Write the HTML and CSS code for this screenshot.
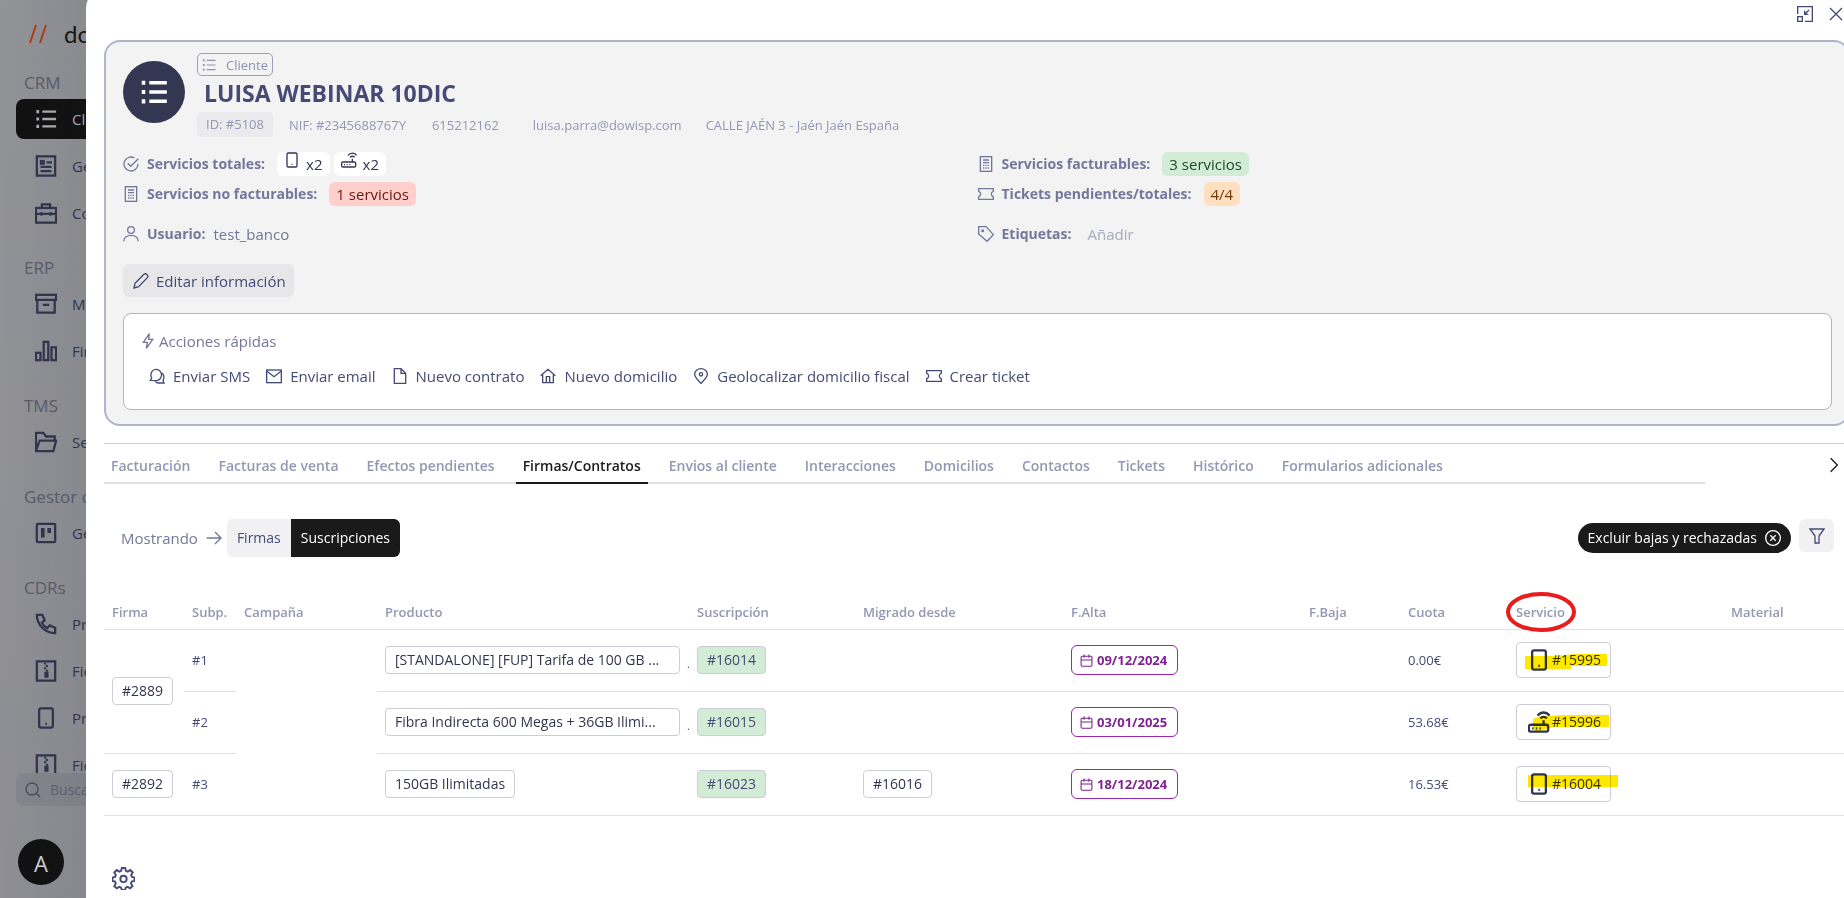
FILE: index.html
```html
<!DOCTYPE html>
<html lang="es">
<head>
   <meta charset="UTF-8">
   <meta name="viewport" content="width=device-width, initial-scale=1.0">
   <title>Cliente - LUISA WEBINAR 10DIC</title>
   <link rel="stylesheet" href="styles.css">
</head>
<body>

   <!-- Icon set -->
   <svg class="icon-defs" aria-hidden="true">
      <symbol id="i-list" viewBox="0 0 24 24"><path d="M8 4h15M8 12h15M8 20h15"/><path d="M1.500 4h3M1.500 12h3M1.500 20h3" stroke-width="3.500"/></symbol>
      <symbol id="i-news" viewBox="0 0 24 24"><rect x="2" y="1.500" width="20" height="21"/><path d="M12.500 8h6M6 13h12M6 17.500h12"/><rect x="6.500" y="6.500" width="3" height="3"/></symbol>
      <symbol id="i-case" viewBox="0 0 24 24"><rect x="1" y="6.500" width="22" height="16"/><path d="M7.500 6.500v-4h9v4M1 13h22M7 11v4M17 11v4"/></symbol>
      <symbol id="i-archive" viewBox="0 0 24 24"><rect x="1" y="2" width="22" height="5.500"/><path d="M2.500 7.500v14h19v-14M8.500 13h7"/></symbol>
      <symbol id="i-chart" viewBox="0 0 24 24"><rect x="1" y="14" width="5" height="8"/><rect x="9.500" y="2" width="5" height="20"/><rect x="18" y="8" width="5" height="14"/></symbol>
      <symbol id="i-folder" viewBox="0 0 24 24"><path d="M1 22V2h8l3 4h9.500v4M1 22l4-11.500h18L20 22z"/></symbol>
      <symbol id="i-board" viewBox="0 0 24 24"><rect x="2" y="2" width="20" height="20" rx="1"/><path d="M8.500 6.500v10.500M15.500 6.500v5.500" stroke-width="4"/></symbol>
      <symbol id="i-phone" viewBox="0 0 24 24"><path d="M2 2h6l2.500 6-3 2.500c1.200 2.800 3.200 4.800 6 6L16 13.500l6 2.500v6C11 22 2 13 2 2z"/></symbol>
      <symbol id="i-zip" viewBox="0 0 24 24"><rect x="2" y="1.500" width="20" height="21"/><path d="M11 3v2M13 5.500v2M11 8v2M13 10.500v2M11.500 14v4h2v-4z" stroke-width="2.500"/></symbol>
      <symbol id="i-mobile" viewBox="0 0 24 24"><rect x="4.500" y="1.500" width="15" height="21" rx="2"/><path d="M11.300 18.500h1.600"/></symbol>
      <symbol id="i-router" viewBox="0 0 24 24"><rect x="1" y="15" width="21" height="7.500" rx="2"/><path d="M17 15v-5M4.500 19h1.500M8.500 19h1.500M12.500 19h1.500M13.500 8c2-2 5-2 7 0M10.500 5c3.500-4.500 10-4.500 13 0"/></symbol>
      <symbol id="i-search" viewBox="0 0 24 24"><circle cx="10.500" cy="10.500" r="9"/><path d="M17 17l6 6"/></symbol>
      <symbol id="i-check" viewBox="0 0 24 24"><path d="M17 2.800A10.500 10.500 0 1 0 22.500 12M7 11l4.500 4.500L23 4"/></symbol>
      <symbol id="i-calc" viewBox="0 0 24 24"><rect x="3.500" y="1" width="17" height="22"/><path d="M7.500 6h9M7.500 10h9"/><path d="M7.500 14h2M11 14h2M14.500 14h2M7.500 18h2M11 18h2M14.500 18h2"/></symbol>
      <symbol id="i-user" viewBox="0 0 24 24"><circle cx="12" cy="6" r="5"/><path d="M1 23c0-12 22-12 22 0"/></symbol>
      <symbol id="i-ticket" viewBox="0 0 24 24"><path d="M1 4h22v4c-4 1-4 7 0 8v4H1v-4c4-1 4-7 0-8z"/></symbol>
      <symbol id="i-tag" viewBox="0 0 24 24"><path d="M1 1h11l11 12-9.500 10L1 12z"/><circle cx="7" cy="7" r="1.300"/></symbol>
      <symbol id="i-pencil" viewBox="0 0 24 24"><path d="M1.500 22.500l1.500-7L16.500 2c3-2.500 7.500 2 5 5L8.500 20.500z"/></symbol>
      <symbol id="i-bolt" viewBox="0 0 24 24"><path d="M14 1L5 14h6L9.500 23 19 9.500h-6z"/></symbol>
      <symbol id="i-chat" viewBox="0 0 24 24"><path d="M2 18.500l2-3.500a8 8.500 0 1 1 7 4z"/><path d="M19.500 7.500c3.500 3 3.500 8 1.500 11l1.500 4H14c-2 0-3.500-1-4.500-2.500"/></symbol>
      <symbol id="i-mail" viewBox="0 0 24 24"><rect x="1" y="3" width="22" height="19"/><path d="M1.500 5l10.500 8 10.500-8"/></symbol>
      <symbol id="i-file" viewBox="0 0 24 24"><path d="M3.500 1h10l7 7v15h-17zM13.500 1v7h7"/></symbol>
      <symbol id="i-home" viewBox="0 0 24 24"><path d="M1 11.500L12 2l11 9.500M4 10v12h16V10M9.500 22v-9h5v9"/></symbol>
      <symbol id="i-pin" viewBox="0 0 24 24"><path d="M12 23C6 17 2.500 14 2.500 9.500a9.500 8.500 0 0 1 19 0C21.500 14 18 17 12 23z"/><circle cx="12" cy="9.500" r="2.500"/></symbol>
      <symbol id="i-arrow" viewBox="0 0 24 24"><path d="M1 12h21M13.500 3l9 9-9 9"/></symbol>
      <symbol id="i-next" viewBox="0 0 24 24"><path d="M7 2l10 10L7 22"/></symbol>
      <symbol id="i-close" viewBox="0 0 24 24"><path d="M3 3l18 18M21 3L3 21"/></symbol>
      <symbol id="i-cancel" viewBox="0 0 24 24"><circle cx="12" cy="12" r="11"/><path d="M8 8l8 8M16 8l-8 8"/></symbol>
      <symbol id="i-filter" viewBox="0 0 24 24"><path d="M1.500 1.500h21L15 12v10.500H9V12z"/></symbol>
      <symbol id="i-shrink" viewBox="0 0 24 24"><path d="M1 12V1h22v22H12"/><rect x="1" y="16" width="7" height="7"/><path d="M18 6l-6 6M11.500 7v5.500H17"/></symbol>
      <symbol id="i-calendar" viewBox="0 0 24 24"><rect x="2" y="4" width="20" height="18.500" rx="2"/><path d="M2 11h20M7.500 1v6M16.500 1v6"/></symbol>
      <symbol id="i-gear" viewBox="0 0 24 24"><path d="M10.300 1h3.400l.8 3 1.900.8 2.700-1.600 2.500 2.500L20 8.400l.8 1.900 2.700.7v3.400l-2.900.8-.8 1.900 1.600 2.700-2.500 2.500-2.700-1.600-1.900.8-.6 2.500h-3.400l-.8-2.500-1.900-.8-2.700 1.600-2.500-2.500L4 17.100l-.8-1.900-2.700-.8V11l2.700-.7L4 8.400 2.400 5.700l2.500-2.500 2.700 1.600L9.500 4z"/><circle cx="12" cy="12.500" r="3.300"/></symbol>
   </svg>

   <aside class="sidebar">
      <div class="logo">
         <svg class="logo-mark" viewBox="0 0 20 20"><path d="M8 1L2 19M18 1l-6 18"/></svg>
         <span>dowisp</span>
      </div>
      <nav class="menu">
         <h2>CRM</h2>
         <a class="active" href="#"><svg class="icon"><use href="#i-list"/></svg>Clientes</a>
         <a href="#"><svg class="icon"><use href="#i-news"/></svg>Gestión</a>
         <a href="#"><svg class="icon"><use href="#i-case"/></svg>Comercial</a>
         <h2>ERP</h2>
         <a href="#"><svg class="icon"><use href="#i-archive"/></svg>Maestros</a>
         <a href="#"><svg class="icon"><use href="#i-chart"/></svg>Finanzas</a>
         <h2>TMS</h2>
         <a href="#"><svg class="icon"><use href="#i-folder"/></svg>Servicios</a>
         <h2>Gestor de tareas</h2>
         <a href="#"><svg class="icon"><use href="#i-board"/></svg>Gestor</a>
         <h2>CDRs</h2>
         <a href="#"><svg class="icon"><use href="#i-phone"/></svg>Precios</a>
         <a href="#"><svg class="icon"><use href="#i-zip"/></svg>Ficheros</a>
         <a href="#"><svg class="icon"><use href="#i-mobile"/></svg>Precios</a>
         <a href="#"><svg class="icon"><use href="#i-zip"/></svg>Ficheros</a>
      </nav>
      <label class="search">
         <svg class="icon"><use href="#i-search"/></svg>
         <input type="text" placeholder="Buscar" aria-label="Buscar">
      </label>
      <div class="user-avatar">A</div>
   </aside>
   <div class="overlay"></div>

   <main class="modal">
      <div class="modal-tools">
         <button type="button" aria-label="Reducir"><svg class="icon"><use href="#i-shrink"/></svg></button>
         <button type="button" aria-label="Cerrar"><svg class="icon"><use href="#i-close"/></svg></button>
      </div>

      <section class="card">
         <header class="client">
            <div class="client-avatar"><svg class="icon"><use href="#i-list"/></svg></div>
            <div class="client-data">
               <span class="type"><svg class="icon"><use href="#i-list"/></svg>Cliente</span>
               <h1>LUISA WEBINAR 10DIC</h1>
               <div class="meta">
                  <span class="meta-id">ID: #5108</span>
                  <span class="meta-nif">NIF: #2345688767Y</span>
                  <span class="meta-phone">615212162</span>
                  <span class="meta-email">luisa.parra@dowisp.com</span>
                  <span>CALLE JAÉN 3 - Jaén Jaén España</span>
               </div>
            </div>
         </header>

         <div class="facts">
            <div class="fact">
               <svg class="icon"><use href="#i-check"/></svg><b>Servicios totales:</b>
               <span class="badge white"><svg class="icon"><use href="#i-mobile"/></svg>x2</span>
               <span class="badge white"><svg class="icon"><use href="#i-router"/></svg>x2</span>
            </div>
            <div class="fact">
               <svg class="icon"><use href="#i-calc"/></svg><b>Servicios facturables:</b>
               <span class="badge green">3 servicios</span>
            </div>
            <div class="fact">
               <svg class="icon"><use href="#i-calc"/></svg><b>Servicios no facturables:</b>
               <span class="badge red">1 servicios</span>
            </div>
            <div class="fact">
               <svg class="icon"><use href="#i-ticket"/></svg><b>Tickets pendientes/totales:</b>
               <span class="badge orange">4/4</span>
            </div>
            <div class="fact spaced">
               <svg class="icon"><use href="#i-user"/></svg><b>Usuario:</b>
               <span>test_banco</span>
            </div>
            <div class="fact spaced">
               <svg class="icon"><use href="#i-tag"/></svg><b>Etiquetas:</b>
               <a class="add" href="#">Añadir</a>
            </div>
         </div>

         <button type="button" class="edit"><svg class="icon"><use href="#i-pencil"/></svg>Editar información</button>

         <div class="quick">
            <div class="quick-title"><svg class="icon"><use href="#i-bolt"/></svg>Acciones rápidas</div>
            <div class="quick-actions">
               <button type="button"><svg class="icon"><use href="#i-chat"/></svg>Enviar SMS</button>
               <button type="button"><svg class="icon"><use href="#i-mail"/></svg>Enviar email</button>
               <button type="button"><svg class="icon"><use href="#i-file"/></svg>Nuevo contrato</button>
               <button type="button"><svg class="icon"><use href="#i-home"/></svg>Nuevo domicilio</button>
               <button type="button"><svg class="icon"><use href="#i-pin"/></svg>Geolocalizar domicilio fiscal</button>
               <button type="button"><svg class="icon"><use href="#i-ticket"/></svg>Crear ticket</button>
            </div>
         </div>
      </section>

      <div class="tabs-bar">
         <nav class="tabs">
            <a href="#">Facturación</a>
            <a href="#">Facturas de venta</a>
            <a href="#">Efectos pendientes</a>
            <a class="active" href="#">Firmas/Contratos</a>
            <a href="#">Envios al cliente</a>
            <a href="#">Interacciones</a>
            <a href="#">Domicilios</a>
            <a href="#">Contactos</a>
            <a href="#">Tickets</a>
            <a href="#">Histórico</a>
            <a href="#">Formularios adicionales</a>
         </nav>
         <button type="button" class="tabs-next" aria-label="Siguiente"><svg class="icon"><use href="#i-next"/></svg></button>
      </div>

      <div class="toolbar">
         <span class="showing">Mostrando <svg class="icon"><use href="#i-arrow"/></svg></span>
         <div class="switch">
            <button type="button">Firmas</button>
            <button type="button" class="active">Suscripciones</button>
         </div>
         <button type="button" class="pill">Excluir bajas y rechazadas<svg class="icon"><use href="#i-cancel"/></svg></button>
         <button type="button" class="filter" aria-label="Filtrar"><svg class="icon"><use href="#i-filter"/></svg></button>
      </div>

      <table class="subs">
         <colgroup>
            <col class="c-firma"><col class="c-subp"><col class="c-campana"><col class="c-producto"><col class="c-susc"><col class="c-migrado">
            <col class="c-alta"><col class="c-baja"><col class="c-cuota"><col class="c-servicio"><col>
         </colgroup>
         <thead>
            <tr>
               <th>Firma</th>
               <th>Subp.</th>
               <th>Campaña</th>
               <th>Producto</th>
               <th>Suscripción</th>
               <th>Migrado desde</th>
               <th>F.Alta</th>
               <th>F.Baja</th>
               <th>Cuota</th>
               <th><span class="circled">Servicio<svg viewBox="0 0 70 40"><ellipse cx="35" cy="20" rx="33" ry="18"/></svg></span></th>
               <th>Material</th>
            </tr>
         </thead>
         <tbody>
            <tr>
               <td rowspan="2"><a class="chip" href="#">#2889</a></td>
               <td>#1</td>
               <td rowspan="3"></td>
               <td><div class="product"><a class="chip" href="#">[STANDALONE] [FUP] Tarifa de 100 GB ...</a><small>.</small></div></td>
               <td><a class="chip on" href="#">#16014</a></td>
               <td></td>
               <td><span class="date"><svg class="icon"><use href="#i-calendar"/></svg>09/12/2024</span></td>
               <td></td>
               <td>0.00€</td>
               <td><a class="chip service" href="#"><svg class="icon"><use href="#i-mobile"/></svg>#15995<svg class="mark m1" viewBox="0 0 82 15"><path d="M0 2h30L50 0h32v12H46v3H0z"/></svg></a></td>
               <td></td>
            </tr>
            <tr>
               <td>#2</td>
               <td><div class="product"><a class="chip" href="#">Fibra Indirecta 600 Megas + 36GB Ilimi...</a><small>.</small></div></td>
               <td><a class="chip on" href="#">#16015</a></td>
               <td></td>
               <td><span class="date"><svg class="icon"><use href="#i-calendar"/></svg>03/01/2025</span></td>
               <td></td>
               <td>53.68€</td>
               <td><a class="chip service" href="#"><svg class="icon"><use href="#i-router"/></svg>#15996<svg class="mark m2" viewBox="0 0 76 17"><path d="M0 4L8 1l22-1h46v12H20L4 17 0 14z"/></svg></a></td>
               <td></td>
            </tr>
            <tr>
               <td><a class="chip" href="#">#2892</a></td>
               <td>#3</td>
               <td><div class="product"><a class="chip short" href="#">150GB Ilimitadas</a></div></td>
               <td><a class="chip on" href="#">#16023</a></td>
               <td><a class="chip" href="#">#16016</a></td>
               <td><span class="date"><svg class="icon"><use href="#i-calendar"/></svg>18/12/2024</span></td>
               <td></td>
               <td>16.53€</td>
               <td><a class="chip service" href="#"><svg class="icon"><use href="#i-mobile"/></svg>#16004<svg class="mark m3" viewBox="0 0 90 12"><path d="M0 0h90v12H0z"/></svg></a></td>
               <td></td>
            </tr>
         </tbody>
      </table>

      <button type="button" class="settings" aria-label="Configuración"><svg class="icon"><use href="#i-gear"/></svg></button>
   </main>

</body>
</html>
```
FILE: styles.css
```css
* {
   box-sizing: border-box;
}
body {
   margin: 0;
   height: 100vh;
   overflow: hidden;
   font-family: 'Segoe UI', 'Open Sans', 'Noto Sans', sans-serif;
   font-size: 15px;
   line-height: 20px;
   color: #454b75;
   background-color: #f3f4f6;
}
a {
   color: inherit;
   text-decoration: none;
}
button {
   font: inherit;
   color: inherit;
   border: 0;
   padding: 0;
   background: none;
   cursor: pointer;
   white-space: nowrap;
}
.icon-defs {
   display: none;
}
.icon {
   width: 16px;
   height: 16px;
   flex: none;
   fill: none;
   stroke: currentColor;
   stroke-width: 2;
   overflow: visible;
}

/* Sidebar */
.sidebar {
   display: flex;
   flex-direction: column;
   width: 280px;
   height: 100vh;
   padding-left: 16px;
   background: linear-gradient(#939498, #8f8f95);
   color: #33354f;
}
.logo {
   display: flex;
   align-items: center;
   gap: 16px;
   height: 67px;
   padding-left: 12px;
   font-family: Lato, sans-serif;
   font-size: 24px;
   color: #151515;
   flex: none;
}
.logo-mark {
   width: 20px;
   height: 20px;
   fill: none;
   stroke: #b23c17;
   stroke-width: 2;
}
.menu {
   flex: 1;
   min-height: 0;
   overflow: hidden;
}
.menu h2 {
   margin: 19px 0 0;
   padding-left: 8px;
   font-size: 17px;
   font-weight: 400;
   line-height: 32px;
   color: #5b5d6c;
}
.menu h2:first-child {
   margin-top: 0;
}
.menu a {
   display: flex;
   align-items: center;
   gap: 15px;
   height: 40px;
   padding-left: 19px;
   margin-bottom: 7px;
   border-radius: 8px;
}
.menu a:has(+ h2) {
   margin-bottom: 0;
}
.menu a.active {
   background-color: #111;
   color: #b0b0b3;
}
.menu .icon {
   width: 22px;
   height: 22px;
   stroke-width: 2.5;
}
.search {
   display: flex;
   align-items: center;
   gap: 9px;
   height: 33px;
   padding-left: 9px;
   border-radius: 8px;
   background-color: #86868e;
   color: #4c4e5e;
   flex: none;
}
.search input {
   width: 150px;
   padding: 0;
   border: 0;
   background: none;
   font: inherit;
   font-size: 14px;
}
.search input::placeholder {
   color: #60626f;
}
.user-avatar {
   width: 46px;
   height: 46px;
   margin: 33px 0 13px 2px;
   border-radius: 50%;
   background-color: #111;
   color: #d5d5d5;
   font-size: 22px;
   line-height: 48px;
   text-align: center;
   flex: none;
}
.overlay {
   position: fixed;
   inset: 0;
   background: linear-gradient(to right, transparent, rgba(40, 40, 60, 0.08) 86px);
}

.modal {
   position: fixed;
   inset: -10px -24px -30px 86px;
   padding: 16px 18px 0;
   border-radius: 18px;
   background-color: #fff;
}
.modal-tools {
   display: flex;
   justify-content: flex-end;
   gap: 15px;
   height: 34px;
   padding-right: 6px;
}
.modal-tools button {
   height: 16px;
   line-height: 0;
}

/* Client card */
.card {
   padding: 11px 16px 14px 17px;
   border: 2px solid #b1b4c9;
   border-radius: 16px;
   background-color: #f3f3f3;
   color: #73779a;
}
.client {
   display: flex;
   gap: 12px;
}
.client-avatar {
   display: flex;
   align-items: center;
   justify-content: center;
   width: 62px;
   height: 62px;
   margin-top: 8px;
   border-radius: 50%;
   background-color: #343752;
   color: #fff;
}
.client-avatar .icon {
   width: 28px;
   height: 28px;
   stroke-width: 3;
}
.type {
   display: inline-flex;
   align-items: center;
   gap: 10px;
   height: 23px;
   padding: 1px 4px 0;
   border: 1px solid #9da0bd;
   border-radius: 5px;
   font-size: 13px;
   color: #8f92b0;
   vertical-align: top;
}
.type .icon {
   width: 14px;
   height: 14px;
}
.client h1 {
   margin: 1px 0 0 7px;
   font-size: 23px;
   font-weight: 700;
   line-height: 32px;
   color: #454b75;
}
.meta {
   display: flex;
   align-items: center;
   height: 25px;
   margin-top: 3px;
   font-size: 13px;
   color: #9497b3;
}
.meta-id {
   padding: 0 9px;
   margin-right: 16px;
   border-radius: 4px;
   background-color: #ebebed;
   line-height: 25px;
}
.meta-nif {
   margin-right: 26px;
}
.meta-phone {
   margin-right: 34px;
}
.meta-email {
   margin-right: 24px;
}
.facts {
   display: grid;
   grid-template-columns: 1fr 1fr;
   row-gap: 6px;
   margin-top: 15px;
}
.fact {
   display: flex;
   align-items: center;
   gap: 8px;
   height: 24px;
}
.fact b {
   font-size: 14px;
}
.fact.spaced {
   margin-top: 10px;
}
.badge {
   padding: 0 7px;
   border-radius: 6px;
   line-height: 24px;
}
.fact b + .badge {
   margin-left: 4px;
}
.badge.white {
   display: flex;
   gap: 6px;
   background-color: #fff;
   color: #33354f;
}
.badge.white + .badge.white {
   margin-left: -4px;
}
.badge.green {
   background-color: #d3ecd6;
   color: #1d4d23;
}
.badge.red {
   background-color: #ffcfcc;
   color: #6b1713;
}
.badge.orange {
   background-color: #ffdfc0;
   color: #6b3a06;
}
.add {
   margin-left: 8px;
   color: #a9abbf;
}
.edit {
   display: flex;
   align-items: center;
   gap: 7px;
   height: 33px;
   padding: 0 8px 0 10px;
   margin-top: 18px;
   border-radius: 6px;
   background-color: #e7e7e9;
   color: #454b75;
}
.quick {
   height: 97px;
   padding: 17px 16px;
   margin-top: 16px;
   border: 1px solid #b1b4c9;
   border-radius: 8px;
   background-color: #fff;
}
.quick-title {
   display: flex;
   align-items: center;
   gap: 3px;
}
.quick-actions {
   display: flex;
   gap: 16px;
   padding-left: 9px;
   margin-top: 15px;
   color: #454b75;
}
.quick-actions button {
   display: flex;
   align-items: center;
   gap: 8px;
}

/* Tabs */
.tabs-bar {
   display: flex;
   justify-content: space-between;
   height: 41px;
   padding-right: 8px;
   margin-top: 17px;
   border-top: 1px solid #cccdd8;
}
.tabs {
   display: flex;
   gap: 14px;
   width: 1601px;
   border-bottom: 2px solid #dfe0e7;
   font-size: 14px;
   font-weight: 600;
   line-height: 44px;
   color: #9397b3;
}
.tabs a {
   height: 40px;
   padding: 0 7px;
   white-space: nowrap;
}
.tabs a.active {
   border-bottom: 2px solid #1a1a1a;
   color: #1a1a1a;
}
.tabs-next {
   padding-top: 5px;
   color: #1a1a1a;
}

/* Toolbar */
.toolbar {
   display: flex;
   align-items: center;
   height: 38px;
   padding: 0 16px 0 17px;
   margin-top: 35px;
}
.showing {
   display: flex;
   align-items: center;
   gap: 8px;
   margin-right: 5px;
   color: #73779a;
}
.switch {
   display: flex;
   height: 38px;
   border-radius: 6px;
   overflow: hidden;
   background-color: #f1f1f4;
   font-size: 14px;
}
.switch button {
   padding: 0 10px;
}
.switch .active {
   background-color: #1a1a1a;
   color: #fff;
}
.pill {
   display: flex;
   align-items: center;
   gap: 8px;
   height: 30px;
   padding: 0 10px;
   margin-left: auto;
   border-radius: 15px;
   background-color: #1a1a1a;
   font-size: 14px;
   color: #fff;
}
.filter {
   width: 35px;
   height: 33px;
   margin: 0 0 5px 8px;
   border-radius: 6px;
   background-color: #f1f1f4;
   line-height: 0;
}

/* Subscriptions table */
.subs {
   width: 100%;
   margin-top: 36px;
   border-collapse: collapse;
   table-layout: fixed;
   font-size: 13px;
}
.c-firma { width: 80px; }
.c-subp { width: 52px; }
.c-campana { width: 141px; }
.c-producto { width: 312px; }
.c-susc { width: 166px; }
.c-migrado { width: 208px; }
.c-alta { width: 238px; }
.c-baja { width: 99px; }
.c-cuota { width: 108px; }
.c-servicio { width: 215px; }
.subs th {
   height: 36px;
   padding: 2px 8px 0;
   border-bottom: 1px solid #dfe0e7;
   font-size: 12px;
   font-weight: 600;
   text-align: left;
   color: #9397b3;
}
.subs th {
   font-size: 13px;
}
.subs td {
   height: 62px;
   padding: 0 8px;
   border-bottom: 1px solid #dfe0e7;
   white-space: nowrap;
}
.chip {
   display: inline-block;
   padding: 0 9px;
   border: 1px solid #cccdd8;
   border-radius: 4px;
   background-color: #fff;
   font-size: 14px;
   line-height: 26px;
   color: #33354f;
   vertical-align: middle;
}
.chip.on {
   background-color: #d3ecd6;
   color: #454b75;
}
.product {
   display: flex;
   align-items: flex-end;
   gap: 7px;
}
.product .chip {
   flex: none;
   width: 295px;
}
.product .chip.short {
   width: auto;
}
.date {
   display: inline-flex;
   align-items: center;
   gap: 4px;
   height: 30px;
   padding: 0 10px 0 8px;
   border: 1px solid #9a27ae;
   border-radius: 6px;
   font-weight: 700;
   color: #7f2390;
   vertical-align: middle;
}
.date .icon {
   width: 13px;
   height: 13px;
}
.chip.service {
   position: relative;
   display: inline-flex;
   align-items: center;
   gap: 2px;
   height: 36px;
   padding-left: 11px;
}
.service .icon {
   width: 22px;
   height: 22px;
   stroke-width: 2.5;
}

/* Marker and pen notes */
.mark {
   position: absolute;
   fill: #ffe800;
   mix-blend-mode: multiply;
}
.m1 {
   left: 8px;
   top: 11px;
   width: 82px;
   height: 15px;
}
.m2 {
   left: 16px;
   top: 10px;
   width: 76px;
   height: 17px;
}
.m3 {
   left: 11px;
   top: 8px;
   width: 90px;
   height: 12px;
}
.circled {
   position: relative;
}
.circled svg {
   position: absolute;
   left: -10px;
   top: -11px;
   width: 70px;
   height: 40px;
   fill: none;
   stroke: #e81c1c;
   stroke-width: 4;
}
.settings {
   margin: 51px 0 0 8px;
   line-height: 0;
}
.settings .icon {
   width: 23px;
   height: 23px;
}
```
